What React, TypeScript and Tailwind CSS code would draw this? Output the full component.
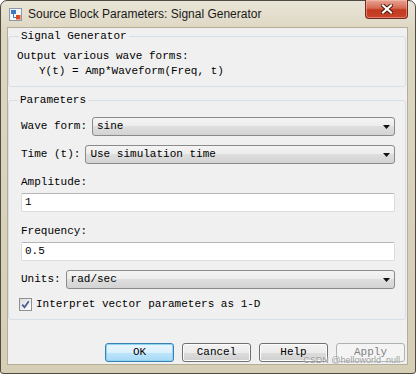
import type { ReactNode } from "react";

function BlockIcon() {
  return (
    <svg width="13" height="13" viewBox="0 0 13 13">
      <rect x="0.5" y="0.5" width="12" height="12" fill="#f3f5f7" stroke="#8c99a6" />
      <rect x="2" y="2" width="5" height="4" fill="#3a78c2" />
      <path d="M4.5 6v3.5H7" fill="none" stroke="#3a78c2" strokeWidth="1" />
      <rect x="7" y="7" width="4.5" height="4.5" fill="#e2471c" />
    </svg>
  );
}

function CloseButton() {
  return (
    <div className="-mt-px flex h-[19px] w-[43px] items-center justify-center rounded-b-[4px] border border-t-0 border-[#6e2a1d] bg-[linear-gradient(#e8a595,#d66a52_45%,#c2391f_55%,#c9452b)] shadow-[inset_0_0_0_1px_rgba(255,200,190,0.45)]">
      <svg width="12" height="10" viewBox="0 0 12 10">
        <path d="M2 1.5l8 7M10 1.5l-8 7" stroke="#4a1309" strokeWidth="4" strokeLinecap="square" />
        <path d="M2 1.5l8 7M10 1.5l-8 7" stroke="#ffffff" strokeWidth="2.2" strokeLinecap="square" />
      </svg>
    </div>
  );
}

function Combo({ value }: { value: string }) {
  return (
    <div className="flex h-[19px] flex-1 items-center justify-between rounded-[3px] border border-[#8a8a8a] bg-[linear-gradient(#f4f4f4,#ececec_50%,#dedede_50%,#d3d3d3)] pl-[4px] pr-[4px]">
      <span>{value}</span>
      <svg width="7" height="4" viewBox="0 0 7 4">
        <path d="M0 0h7L3.5 4z" fill="#111" />
      </svg>
    </div>
  );
}

function Field({ value }: { value: string }) {
  return (
    <div className="flex h-[19px] items-center rounded-[2px] border border-[#dcdcdc] border-t-[#b4b6bc] bg-white pl-[3px]">
      {value}
    </div>
  );
}

function Group({ title, children, legendClass, className }: { title: string; children: ReactNode; legendClass: string; className: string }) {
  return (
    <fieldset className={`rounded-[3px] border border-[#d5dfe5] ${className}`}>
      <legend className={`px-[2px] leading-[14px] ${legendClass}`}>{title}</legend>
      {children}
    </fieldset>
  );
}

function Button({ label, variant }: { label: string; variant?: "default" | "disabled" }) {
  const look =
    variant === "default"
      ? "border-[#3c7fb1] bg-[linear-gradient(#eaf6fd,#d9f0fc_50%,#bee6fd_50%,#a7d9f5)] shadow-[inset_0_0_0_1px_#8ed4f4]"
      : variant === "disabled"
      ? "border-[#adb2b5] bg-[#f4f4f4] text-[#838383]"
      : "border-[#707070] bg-[linear-gradient(#f2f2f2,#ebebeb_50%,#dddddd_50%,#cfcfcf)] shadow-[inset_0_0_0_1px_#fcfcfc]";
  return (
    <div className={`flex h-[19px] w-[69px] items-center justify-center rounded-[3px] border ${look}`}>
      {label}
    </div>
  );
}

export default function App() {
  return (
    <div className="h-[375px] w-[416px] bg-white font-['Liberation_Mono',monospace] text-[11px] leading-[15px] text-black">
      <div className="relative flex h-[374px] w-[416px] flex-col rounded-t-[7px] rounded-b-[3px] border border-[#4f4b43] bg-[linear-gradient(#e9e5d7,#ddd6c2_8%,#d6ceb5)] pb-[8px] pl-[6px] pr-[7px]">
        <div className="flex h-[26px] items-start">
          <div className="flex h-[26px] items-center gap-[6px] pl-[2px]">
            <BlockIcon />
            <span className="font-['Liberation_Sans',sans-serif] text-[12px] text-[#1a1a1a]">
              Source Block Parameters: Signal Generator
            </span>
          </div>
          <div className="ml-auto">
            <CloseButton />
          </div>
        </div>

        <div className="flex flex-1 flex-col border border-[#b3ad99] bg-[#f0f0f0]">
          <Group title="Signal Generator" legendClass="ml-[2px]" className="mr-[1px] mt-[1px] pb-[7px] pl-[8px] pt-[6px]">
            <div>Output various wave forms:</div>
            <div className="pl-[22px]">Y(t) = Amp*Waveform(Freq, t)</div>
          </Group>

          <Group title="Parameters" legendClass="-ml-[3px]" className="mr-[1px] mt-[6px] pb-[7px] pl-[12px] pr-[10px] pt-[10px]">
            <div className="flex items-center gap-[5px]">
              <span>Wave form:</span>
              <Combo value="sine" />
            </div>
            <div className="mt-[9px] flex items-center gap-[5px]">
              <span>Time (t):</span>
              <Combo value="Use simulation time" />
            </div>
            <div className="mt-[11px]">Amplitude:</div>
            <div className="mt-[3px]">
              <Field value="1" />
            </div>
            <div className="mt-[12px]">Frequency:</div>
            <div className="mt-[3px]">
              <Field value="0.5" />
            </div>
            <div className="mt-[9px] flex items-center gap-[5px]">
              <span>Units:</span>
              <Combo value="rad/sec" />
            </div>
            <div className="mt-[8px] flex h-[15px] items-center gap-[4px] -ml-[2px]">
              <div className="flex h-[13px] w-[13px] items-center justify-center border border-[#8e8f8f] bg-[linear-gradient(135deg,#dcdcdc,#ffffff)]">
                <svg width="9" height="9" viewBox="0 0 9 9">
                  <path d="M1.2 4.6l2.3 2.6L7.8 1.2" fill="none" stroke="#4a5f97" strokeWidth="1.8" />
                </svg>
              </div>
              <span>Interpret vector parameters as 1-D</span>
            </div>
          </Group>

          <div className="mt-auto flex justify-end gap-[8px] pb-[2px] pr-[2px]">
            <Button label="OK" variant="default" />
            <Button label="Cancel" />
            <Button label="Help" />
            <Button label="Apply" variant="disabled" />
          </div>
        </div>

        <div className="absolute bottom-[7px] right-[15px] font-['Liberation_Sans',sans-serif] text-[9px] leading-[11px] text-[#9a9a9a] [text-shadow:0_0_2px_#ffffff]">
          CSDN @helloworld_null
        </div>
      </div>
    </div>
  );
}
